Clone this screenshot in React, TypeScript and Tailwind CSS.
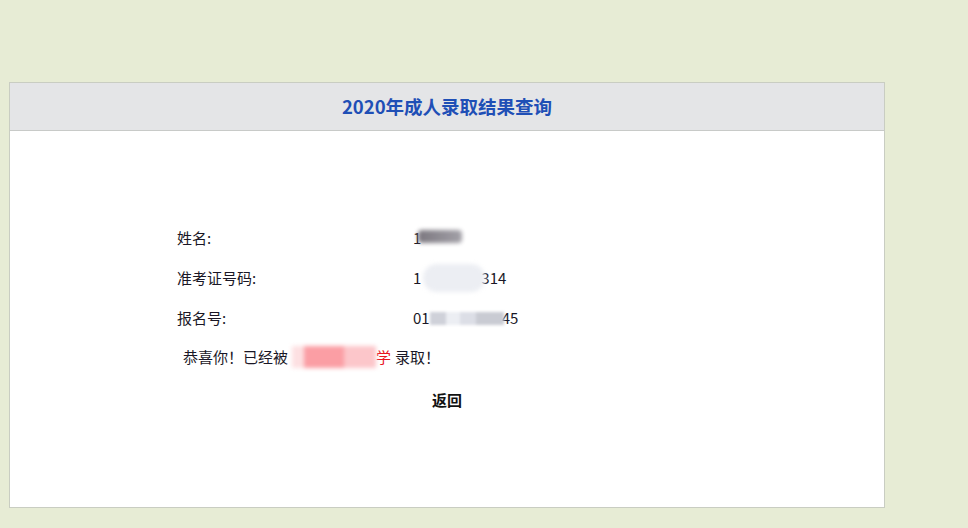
const Blur = ({ className }: { className: string }) => (
  <span className={`inline-block align-middle blur-[2px] ${className}`} />
);

const rows = [
  {
    label: "姓名:",
    value: (
      <>
        <span>1</span>
        <Blur className="ml-[-3px] mt-[-4px] h-[13px] w-[44px] rounded-sm bg-gradient-to-r from-[#7c7880] to-[#a3a1a8] blur-[1px]" />
      </>
    ),
  },
  {
    label: "准考证号码:",
    value: (
      <>
        <span>1</span>
        <Blur className="ml-[2px] mr-[-4px] h-[28px] w-[62px] rounded-[14px] bg-[#eceef3]" />
        <span>314</span>
      </>
    ),
  },
  {
    label: "报名号:",
    value: (
      <>
        <span>01</span>
        <span className="mr-[-2px] inline-flex h-[13px] w-[74px] align-middle blur-[1.5px]">
          <span className="w-[16px] bg-[#cfd1d9]" />
          <span className="w-[14px] bg-[#eceef3]" />
          <span className="w-[16px] bg-[#dcdee6]" />
          <span className="w-[28px] bg-[#c9cbd3]" />
        </span>
        <span>45</span>
      </>
    ),
  },
];

export default function App() {
  return (
    <div className="h-[528px] w-[968px] bg-[#e7ecd5] pt-[82px] pl-[9px] font-['Noto_Sans_CJK_SC','Liberation_Sans',sans-serif] text-[#1a1726]">
      <div className="h-[426px] w-[876px] border border-[#c9cdc2] bg-white">
        <div className="flex h-[48px] items-center justify-center border-b border-[#c8cac8] bg-[#e4e5e7]">
          <h1 className="text-[18.5px] font-bold text-[#1f4fb6]">2020年成人录取结果查询</h1>
        </div>
        <div className="pt-[87px] pl-[167px] text-[15px]">
          {rows.map((r) => (
            <div key={r.label} className="flex h-[40px] items-center">
              <span className="w-[236px]">{r.label}</span>
              <span className="flex items-center">{r.value}</span>
            </div>
          ))}
          <div className="flex h-[38px] items-center pl-[6px]">
            <span>恭喜你！已经被</span>
            <span className="ml-[4px] inline-flex h-[22px] w-[84px] blur-[2px]">
              <span className="w-[12px] bg-[#fde0e2]" />
              <span className="w-[40px] bg-[#fb9ea4]" />
              <span className="w-[32px] bg-[#fcc6ca]" />
            </span>
            <span className="text-[#e8141e]">学</span>
            <span className="ml-[4px]">录取！</span>
          </div>
          <div className="flex h-[48px] items-center pl-[255px]">
            <span className="font-bold text-[#111]">返回</span>
          </div>
        </div>
      </div>
    </div>
  );
}
